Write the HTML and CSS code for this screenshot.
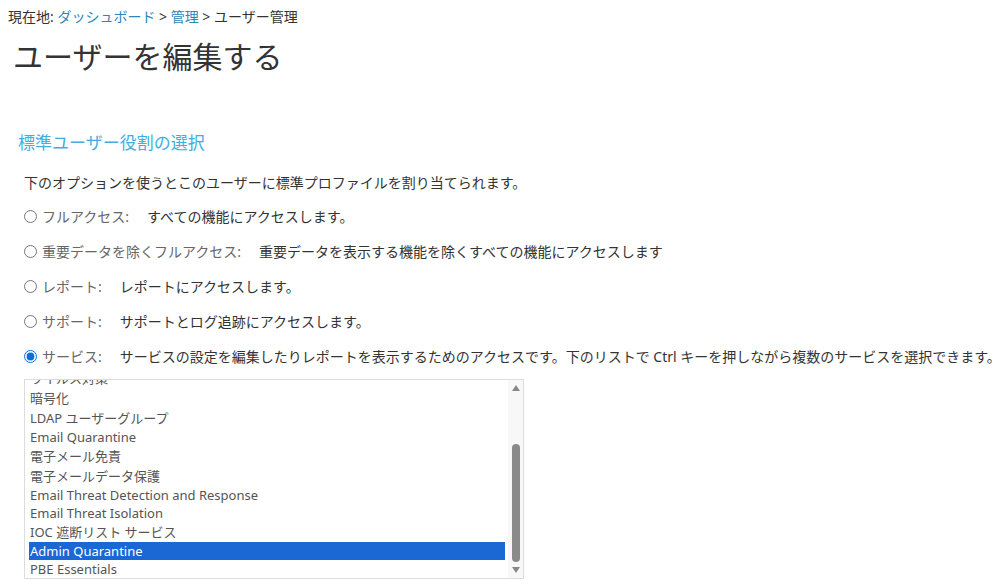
FILE: index.html
```html
<!DOCTYPE html>
<html lang="ja">
<head>
    <meta charset="UTF-8">
    <meta name="viewport" content="width=device-width, initial-scale=1.0">
    <title>ユーザーを編集する</title>
    <link rel="stylesheet" href="styles.css">
</head>
<body>
    <div id="crumbs">現在地: <a href="#">ダッシュボード</a> &gt; <a href="#">管理</a> &gt; ユーザー管理</div>
    <h1 id="page-title">ユーザーを編集する</h1>

    <h2 id="role-head">標準ユーザー役割の選択</h2>
    <p id="role-intro">下のオプションを使うとこのユーザーに標準プロファイルを割り当てられます。</p>

    <div id="roles">
        <label class="role-row">
            <input type="radio" name="role">
            <span class="role-name">フルアクセス:</span>
            <span class="role-desc">すべての機能にアクセスします。</span>
        </label>
        <label class="role-row">
            <input type="radio" name="role">
            <span class="role-name">重要データを除くフルアクセス:</span>
            <span class="role-desc">重要データを表示する機能を除くすべての機能にアクセスします</span>
        </label>
        <label class="role-row">
            <input type="radio" name="role">
            <span class="role-name">レポート:</span>
            <span class="role-desc">レポートにアクセスします。</span>
        </label>
        <label class="role-row">
            <input type="radio" name="role">
            <span class="role-name">サポート:</span>
            <span class="role-desc">サポートとログ追跡にアクセスします。</span>
        </label>
        <label class="role-row">
            <input type="radio" name="role" checked>
            <span class="role-name">サービス:</span>
            <span class="role-desc">サービスの設定を編集したりレポートを表示するためのアクセスです。下のリストで Ctrl キーを押しながら複数のサービスを選択できます。</span>
        </label>
    </div>

    <div id="service-box">
        <ul id="service-list">
            <li class="ja first">ウイルス対策</li>
            <li class="ja">暗号化</li>
            <li class="ja">LDAP ユーザーグループ</li>
            <li>Email Quarantine</li>
            <li class="ja">電子メール免責</li>
            <li class="ja">電子メールデータ保護</li>
            <li>Email Threat Detection and Response</li>
            <li>Email Threat Isolation</li>
            <li class="ja">IOC 遮断リスト サービス</li>
            <li class="selected">Admin Quarantine</li>
            <li>PBE Essentials</li>
        </ul>
        <div class="scrollbar">
            <span class="arrow up"></span>
            <div class="track"><div class="thumb"></div></div>
            <span class="arrow down"></span>
        </div>
    </div>
</body>
</html>
```

FILE: styles.css
```css
body {
    font-family: "Noto Sans", "Noto Sans CJK JP", sans-serif;
    color: #333;
    background-color: #ffffff;
    margin: 0;
    padding: 8px;
}
#crumbs {
    font-size: 14px;
    line-height: 18px;
}
#crumbs a {
    color: #2e86b9;
    text-decoration: none;
}
#page-title {
    font-size: 30px;
    font-weight: normal;
    line-height: 40px;
    margin: 11px 0 0 0;
    padding-left: 5px;
    color: #333;
}
#role-head {
    font-size: 17px;
    font-weight: normal;
    line-height: 24px;
    color: #45ace0;
    margin: 54px 0 0 0;
    padding-left: 10px;
}
#role-intro {
    font-size: 14px;
    line-height: 20px;
    margin: 18px 0 0 0;
    padding-left: 16px;
}
#roles {
    display: flex;
    flex-direction: column;
    gap: 15px;
    margin-top: 13px;
    padding-left: 16px;
}
.role-row {
    display: flex;
    align-items: center;
    height: 20px;
    font-size: 14px;
    white-space: nowrap;
}
.role-row input {
    width: 13px;
    height: 13px;
    margin: 0 5px 0 0;
    accent-color: #0b6fdb;
}
.role-name {
    color: #666;
    margin-right: 18px;
}
.role-desc {
    color: #333;
}
#service-box {
    display: flex;
    width: 498px;
    height: 198px;
    margin: 13px 0 0 16px;
    border: 1px solid #dcdcdc;
    overflow: hidden;
}
#service-list {
    flex: 1;
    list-style-type: none;
    margin: 0;
    padding: 0 3px 0 4px;
    overflow: hidden;
    font-size: 13px;
    color: #555;
}
#service-list li {
    height: 18px;
    line-height: 18px;
    padding-left: 1px;
    white-space: nowrap;
}
#service-list li.ja {
    height: 20px;
    line-height: 20px;
}
#service-list li.first {
    margin-top: -12px;
}
#service-list li.selected {
    background-color: #1b67d3;
    color: #ffffff;
}
.scrollbar {
    width: 15px;
    display: flex;
    flex-direction: column;
    align-items: center;
    background-color: #f8f8f8;
}
.arrow {
    width: 0;
    height: 0;
    border-left: 4px solid transparent;
    border-right: 4px solid transparent;
}
.arrow.up {
    margin-top: 5px;
    border-bottom: 6px solid #888;
}
.arrow.down {
    margin: 2px 0 5px 0;
    border-top: 6px solid #888;
}
.track {
    flex: 1;
    width: 8px;
    position: relative;
}
.thumb {
    position: absolute;
    left: 0;
    right: 0;
    top: 53px;
    bottom: 3px;
    background-color: #8a8a8a;
    border-radius: 4px;
}
```
